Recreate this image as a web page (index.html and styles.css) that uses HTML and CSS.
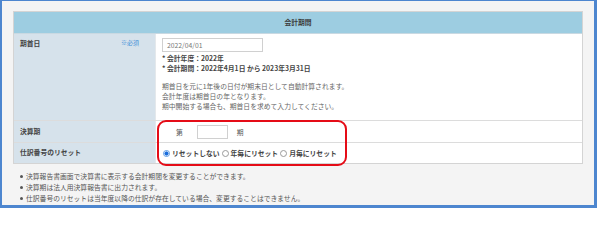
FILE: index.html
```html
<!DOCTYPE html>
<html lang="ja">
<head>
<meta charset="utf-8">
<title>会計期間</title>
<link rel="stylesheet" href="styles.css">
</head>
<body>
<div class="frame">
  <div class="panel">
    <div class="head">会計期間</div>
    <div class="row row-first">
      <div class="label label-top"><span>期首日</span><span class="req">※必須</span></div>
      <div class="cell cell-top">
        <div class="field field-date">2022/04/01</div>
        <div class="meta">* 会計年度：2022年</div>
        <div class="meta">* 会計期間：2022年4月1日 から 2023年3月31日</div>
        <div class="desc">
          <div>期首日を元に1年後の日付が期末日として自動計算されます。</div>
          <div>会計年度は期首日の年となります。</div>
          <div>期中開始する場合も、期首日を求めて入力してください。</div>
        </div>
      </div>
    </div>
    <div class="row row-mid">
      <div class="label label-mid">決算期</div>
      <div class="cell cell-mid">
        <span class="dai">第</span>
        <span class="field field-num"></span>
        <span class="ki">期</span>
      </div>
    </div>
    <div class="row row-last">
      <div class="label label-mid">仕訳番号のリセット</div>
      <div class="cell cell-mid">
        <span class="radio radio-on"></span><span class="opt">リセットしない</span>
        <span class="radio"></span><span class="opt">年毎にリセット</span>
        <span class="radio"></span><span class="opt">月毎にリセット</span>
      </div>
    </div>
  </div>
  <ul class="notes">
    <li>決算報告書画面で決算書に表示する会計期間を変更することができます。</li>
    <li>決算期は法人用決算報告書に出力されます。</li>
    <li>仕訳番号のリセットは当年度以降の仕訳が存在している場合、変更することはできません。</li>
  </ul>
  <div class="callout"></div>
</div>
</body>
</html>
```

FILE: styles.css
```css
html, body {
  margin: 0;
  padding: 0;
}
body {
  font-family: "Noto Sans CJK JP", "Noto Sans", sans-serif;
  font-size: 6.8px;
  color: #555;
}
.frame {
  position: relative;
  width: 597px;
  height: 208px;
  box-sizing: border-box;
  border-style: solid;
  border-color: #4d86cf;
  border-width: 1px 3px 3px 2px;
  background: #f4f4f4;
  padding: 10px 11px 0 11px;
}
.panel {
  width: 570px;
  box-sizing: border-box;
  border: 1px solid #d4d4d4;
  background: #fff;
}
.head {
  height: 21px;
  line-height: 21px;
  background: #9dcde1;
  border-bottom: 1px solid #c9d9e2;
  text-align: center;
  font-weight: bold;
  color: #3a3a3a;
}
.row {
  display: grid;
  grid-template-columns: 142px 1fr;
  border-bottom: 1px solid #dcdcdc;
}
.row-first { height: 86px; }
.row-mid { height: 21px; }
.row-last { height: 20px; border-bottom: none; }
.label {
  background: #d6e2eb;
  border-right: 1px solid #e4e8eb;
  font-weight: bold;
  color: #444;
  padding: 0 16px 0 6px;
  display: flex;
  justify-content: space-between;
}
.label-top {
  padding-top: 4px;
  line-height: 10px;
}
.label-mid {
  align-items: center;
  padding-bottom: 2px;
}
.req {
  color: #3f8fd8;
  font-weight: normal;
  font-size: 6px;
}
.cell {
  padding-left: 6px;
}
.cell-top {
  padding-top: 4px;
}
.cell-mid {
  display: flex;
  align-items: center;
}
.field {
  box-sizing: border-box;
  height: 14px;
  border: 1px solid #d0d0d0;
  background: #fff;
}
.field-date {
  width: 101px;
  padding-left: 4px;
  line-height: 12px;
  color: #777;
  margin-bottom: 2.25px;
}
.meta {
  line-height: 9.5px;
  font-weight: bold;
  color: #444;
}
.desc {
  margin-top: 7.75px;
  line-height: 10px;
  color: #666;
}
.dai {
  margin-left: 14px;
  color: #555;
}
.field-num {
  display: inline-block;
  width: 31px;
  margin-left: 14px;
}
.ki {
  margin-left: 9px;
  color: #555;
}
.radio {
  display: inline-block;
  box-sizing: border-box;
  width: 7px;
  height: 7px;
  border: 1px solid #9a9a9a;
  border-radius: 50%;
  background: #fff;
  margin-left: 1px;
  margin-right: 2px;
}
.radio-on {
  border-color: #5d9be4;
  background: radial-gradient(circle, #1a6ddc 0 1.8px, #fff 2.3px);
}
.opt {
  font-weight: bold;
  color: #444;
  margin-right: 1px;
}
.notes {
  list-style: none;
  margin: 7px 0 0 0;
  padding: 0;
  line-height: 11px;
  color: #555;
}
.notes li {
  display: flex;
  align-items: center;
}
.notes li::before {
  content: "";
  flex: none;
  width: 3px;
  height: 3px;
  border-radius: 50%;
  background: #555;
  margin: 0 3px 0 7px;
}
.callout {
  position: absolute;
  left: 155px;
  top: 119px;
  width: 190px;
  height: 46px;
  box-sizing: border-box;
  border: 2px solid #e50c17;
  border-radius: 9px;
}
```
